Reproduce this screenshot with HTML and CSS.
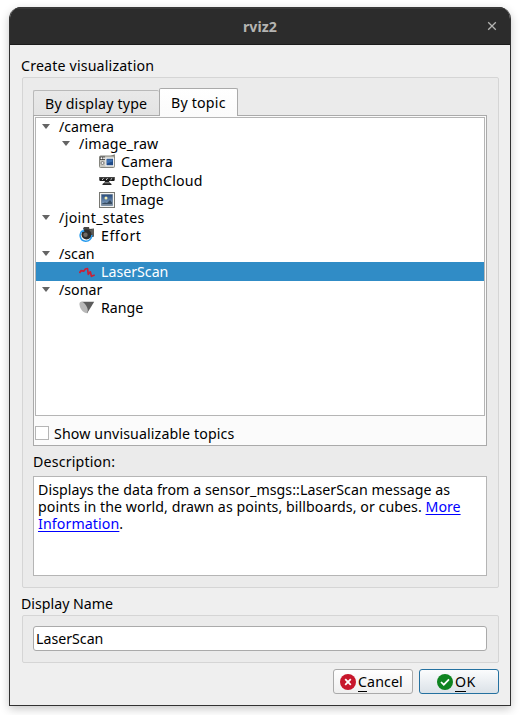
FILE: index.html
```html
<!DOCTYPE html>
<html lang="en">
<head>
<meta charset="utf-8">
<title>rviz2</title>
<link rel="stylesheet" href="styles.css">
</head>
<body>
<div class="window">
  <header class="titlebar">
    <span class="title">rviz2</span>
    <svg class="close" width="10" height="10" viewBox="0 0 10 10"><path d="M1.2 1.2 8.8 8.8M8.8 1.2 1.2 8.8" fill="none" stroke="#b4b4b2" stroke-width="1.3"/></svg>
  </header>
  <main class="content">
    <div class="heading"><span class="t-create">Create visualization</span></div>
    <section class="group group-main">
      <div class="tabs">
        <div class="tab tab-type"><span class="t-type">By display type</span></div>
        <div class="tab tab-topic active"><span class="t-topic">By topic</span></div>
      </div>
      <div class="pane">
        <div class="tree">
          <div class="row"><i class="arrow"></i><span class="t-camera-topic">/camera</span></div>
          <div class="row l1"><i class="arrow"></i><span class="t-raw">/image_raw</span></div>
          <div class="row item l2">
            <svg width="16" height="16" viewBox="0 0 16 16"><path d="M10 2.5 15.8.3V4H10z" fill="#77776f"/><rect x=".5" y="2" width="15" height="11.5" rx="1" fill="#c9c9c2" stroke="#85857f"/><path d="M1 2.5h5v3.5H1z" fill="#444"/><circle cx="2.5" cy="4.2" r="1" fill="#fff"/><circle cx="5" cy="4.2" r="1" fill="#eee"/><circle cx="3.5" cy="9" r="1.5" fill="#eee" stroke="#666" stroke-width=".8"/><rect x="7" y="4.2" width="7.6" height="7.6" fill="#204a87" stroke="#f7f7f7"/><path d="M8 5.5h5.5v2L8 9.5z" fill="#3c70b2"/></svg>
            <span class="t-camera">Camera</span></div>
          <div class="row item l2">
            <svg width="16" height="16" viewBox="0 0 16 16"><path d="M.3 4h15.4v3.2L15 8H1L.3 7.2z" fill="#1c1c1c"/><path d="M1 4.8h14" stroke="#777" stroke-width=".6"/><path d="m3 6.8 1.6-1.4M7 6.8l1.6-1.4M11.5 6.8l1.6-1.4" stroke="#eee"/><path d="M6 8h4l.5 1.5 2 1.5v1h-9v-1l2-1.5z" fill="#222"/><path d="M5.5 9.8h5" stroke="#bbb" stroke-width=".8"/></svg>
            <span class="t-depth">DepthCloud</span></div>
          <div class="row item l2">
            <svg width="16" height="16" viewBox="0 0 16 16"><defs><linearGradient id="sky" x2="0" y2="1"><stop stop-color="#284b7c"/><stop offset="1" stop-color="#8dabc8"/></linearGradient></defs><rect x=".5" y=".5" width="15" height="15" fill="#f4f4f1" stroke="#777772"/><path d="M2.5 2.5h11v11h-11z" fill="url(#sky)" stroke="#60758f" stroke-width=".7"/><circle cx="7" cy="6" r="1.5" fill="#f4eeb1"/><path d="m3 11.5 3-1 2 .5 3-3 2 2.5V13H3z" fill="#364b60"/><path d="M3 12.5h10" stroke="#79899a"/></svg>
            <span class="t-image">Image</span></div>
          <div class="row"><i class="arrow"></i><span class="t-joint">/joint_states</span></div>
          <div class="row item">
            <svg class="motor" width="16" height="16" viewBox="0 0 16 16"><path d="M4 1.5 5 0h5l.5 2 4.5-.5v8L10 11z" fill="#484846"/><path d="M12 3v6M14 2v7" stroke="#85857e" stroke-width=".7"/><circle cx="7.5" cy="7.5" r="5" fill="#2d2d2d"/><circle cx="6.5" cy="7.8" r="2.2" fill="#706b66"/><path d="M3.5 3.7A5.9 5.9 0 0 0 6.5 14.3 6 6 0 0 0 12.8 8" fill="none" stroke="#2a9cee" stroke-width="1.5"/><path d="m4.5 2 1 2.8-3.5.5z" fill="#2a9cee"/></svg>
            <span class="t-effort">Effort</span></div>
          <div class="row"><i class="arrow"></i><span class="t-scan">/scan</span></div>
          <div class="row item selected">
            <svg width="16" height="16" viewBox="0 0 16 16"><path d="M.4 9 2 6.7l2.7.5L6.400 5 8.500 4.500 9.300 10.300 11.300 7.800 12.400 12.300 15.700 11" fill="none" stroke="#cb2035" stroke-width="1.7" stroke-linejoin="round"/></svg>
            <span class="t-laser">LaserScan</span></div>
          <div class="row"><i class="arrow"></i><span class="t-sonar">/sonar</span></div>
          <div class="row item">
            <svg width="16" height="16" viewBox="0 0 16 16"><path d="M2.5 1.8h12.7L8 13.5z" fill="#5c5c5c"/><ellipse cx="4.6" cy="7.3" rx="3.1" ry="6.3" transform="rotate(-31 4.6 7.3)" fill="#b8b8b8"/></svg>
            <span class="t-range">Range</span></div>
        </div>
        <div class="check"><i class="box"></i><span class="t-show">Show unvisualizable topics</span></div>
      </div>
      <div class="desc-label"><span class="t-desc">Description:</span></div>
      <div class="description">
        <div><span class="t-line1">Displays the data from a sensor_msgs::LaserScan message as</span></div>
        <div><span class="t-line2">points in the world, drawn as points, billboards, or cubes. </span><span class="link t-more">More</span></div>
        <div><span class="link t-info">Information</span>.</div>
      </div>
    </section>
    <div class="heading name-heading"><span class="t-name">Display Name</span></div>
    <section class="group group-name"><div class="input"><span class="t-input">LaserScan</span></div></section>
    <div class="buttons">
      <div class="button"><svg width="16" height="16" viewBox="0 0 16 16"><circle cx="8" cy="8" r="8" fill="#c7162b"/><path d="m5.2 5.2 5.6 5.6m0-5.6-5.6 5.6" stroke="#fff" stroke-width="1.8"/></svg><span class="t-cancel"><u>C</u>ancel</span></div>
      <div class="button ok"><svg width="16" height="16" viewBox="0 0 16 16"><circle cx="8" cy="8" r="8" fill="#0e8420"/><path d="m4 8 2.8 2.7L12 5.3" fill="none" stroke="#fff" stroke-width="1.7"/></svg><span class="t-ok"><u>O</u>K</span></div>
    </div>
  </main>
</div>
</body>
</html>
```
FILE: styles.css
```css
* { box-sizing: border-box; }
body { margin: 0; padding: 7px 9px 9px; height: 715px; overflow: hidden; background: #fff; color: #000; font: 14.2px/17px "Noto Sans", sans-serif; white-space: nowrap; }
.window { width: 502px; height: 699px; border-radius: 12px 12px 0 0; border: 1px solid #323232; border-top: 0; background: #efefef; box-shadow: 0 3px 10px rgba(0,0,0,.22); overflow: hidden; }
.titlebar { height: 38px; display: flex; align-items: center; background: #2c2c2c; border-top: 2px solid #393939; border-bottom: 1px solid #1b1b1b; color: #b4b4b2; font-weight: 700; padding: 0 13px 2px 233px; }
.title { flex: 1; padding-top: 2px; }
.content { padding: 12px 11px 0 12px; }
.heading { height: 20px; line-height: 18px; margin-left: -1px; }
svg { display: block; flex: none; }
.group { width: 477px; border: 1px solid #d5d5d5; border-radius: 2px; background: #ebebeb; padding: 10px; }
.group-main { height: 511px; }
.tabs { height: 27px; display: flex; align-items: flex-end; }
.tab { height: 25px; border: 1px solid #b9b9b9; border-bottom: 0; border-radius: 2px 2px 0 0; background: linear-gradient(#e9e9e9,#e3e3e3); padding: 4px 0 0 11px; }
.tab-type { width: 126px; border-right: 0; }
.tab-topic { width: 79px; height: 28px; margin-bottom: -1px; position: relative; background: linear-gradient(#fff,#fbfbfb); border-color: #aaa; padding-top: 5px; }
.pane { width: 454px; height: 331px; border: 1px solid #aaa; background: #fbfbfb; padding: 1px; }
.tree { height: 299px; width: 450px; border: 1px solid #b5b5b5; background: #fff; }
.row { height: 17px; display: flex; align-items: center; padding-left: 6px; }
.l1 { padding-left: 26px; }
.item { height: 19px; padding-left: 43px; }
.item.l2 { padding-left: 63px; }
.item span { margin-left: 6px; }
.row:not(.item) span { margin-left: 9px; }
.selected { background: #308cc6; color: #fff; }
.motor { margin-top: -2px; }
.arrow { border: 4px solid transparent; border-top: 5px solid #646464; border-bottom: 0; }
.check { height: 30px; padding-top: 4px; display: flex; align-items: center; }
.box { width: 14px; height: 14px; border: 1px solid #b5b5b5; background: #fff; margin-right: 5px; }
.desc-label { height: 30px; padding-top: 7px; }
.description { width: 454px; height: 100px; border: 1px solid #b5b5b5; background: #fff; padding: 4px; }
.description div { display: flex; white-space: pre; }
.link { color: #0000ff; text-decoration: underline 1px; text-underline-offset: 2px; text-decoration-skip-ink: none; }
.name-heading { height: 27px; padding-top: 7px; }
.group-name { height: 48px; }
.input { width: 454px; height: 25px; border: 1px solid #aaa; border-radius: 3px; background: #fff; padding: 3px 2px; }
.buttons { display: flex; justify-content: flex-end; gap: 6px; padding-top: 6px; }
.button { width: 80px; height: 25px; border: 1px solid #aaa; border-radius: 3px; background: linear-gradient(#fff,#efefef); display: flex; align-items: center; padding-left: 6px; gap: 2px; }
.ok { border-color: #2571a0; padding-left: 17px; background: linear-gradient(#fbfcfd,#dbe2e8); }
u { text-decoration: none; border-bottom: 1px solid #000; }

/* Label tracking */
.t-create, .t-type, .t-desc { letter-spacing: .17px; }
.t-topic { letter-spacing: .2px; }
.t-raw { letter-spacing: .15px; }
.t-depth { letter-spacing: .2px; }
.t-joint { letter-spacing: .35px; }
.t-effort { letter-spacing: .55px; }
.t-show { letter-spacing: .12px; }
.t-line1, .t-line2 { letter-spacing: .055px; }
.t-info, .t-cancel { letter-spacing: .1px; }
.t-ok { letter-spacing: .3px; }
```
